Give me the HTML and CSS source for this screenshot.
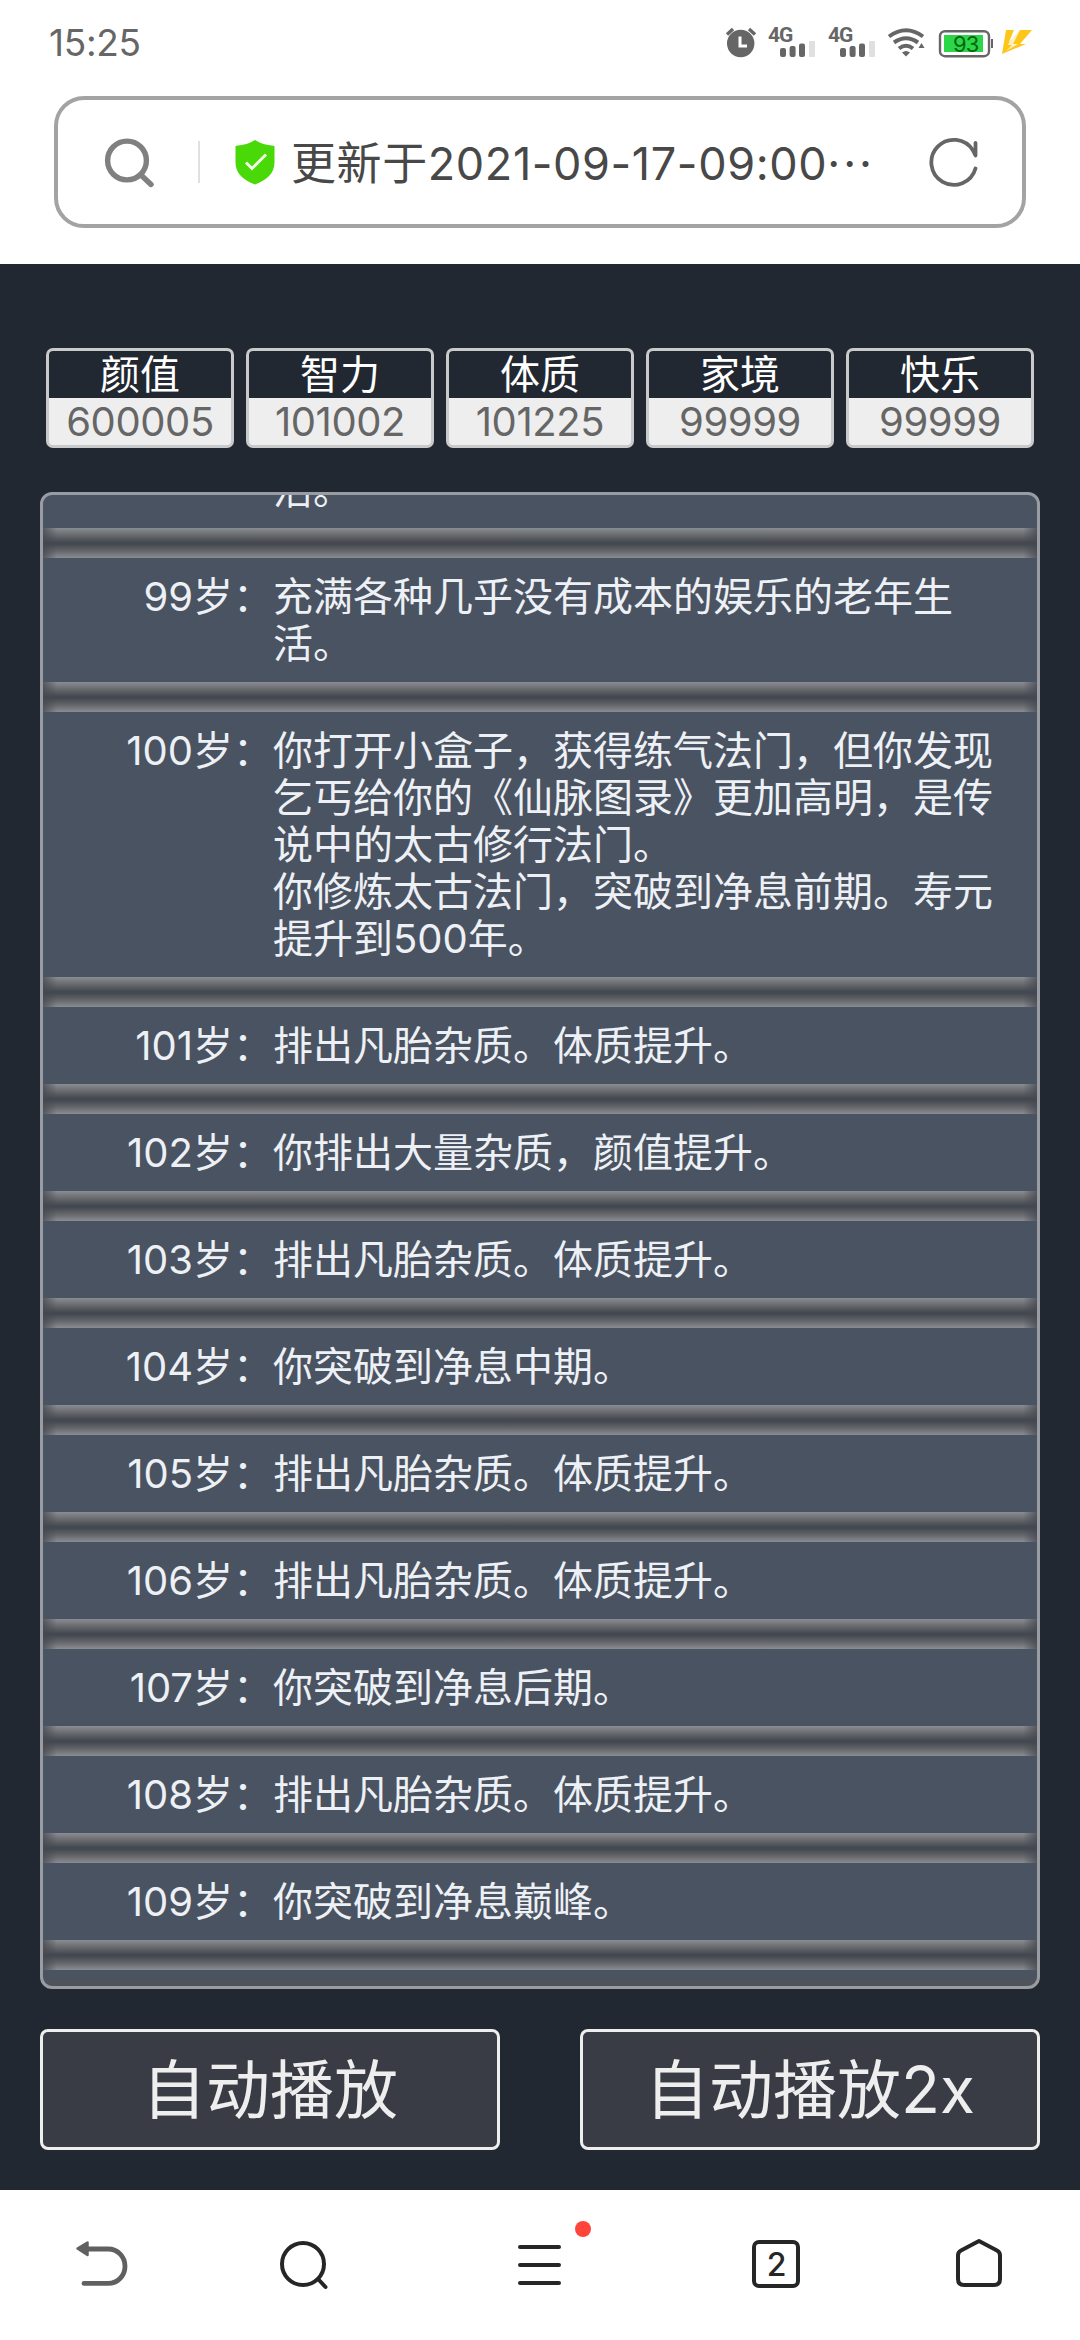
FILE: index.html
```html
<!DOCTYPE html>
<html lang="zh-CN">
<head>
<meta charset="utf-8">
<title>更新于2021-09-17-09:00</title>
<link rel="stylesheet" href="styles.css">
</head>
<body>
<header class="chrome">
  <div class="status">
    <span class="clock">15:25</span>
    <svg class="status-icons" width="310" height="50" viewBox="725 15 310 50">
      <g fill="#666">
        <circle cx="740.7" cy="43.5" r="13.7"/>
        <path d="M727 34.500l6-5.500M755 34.500l-6-5.500" stroke="#666" stroke-width="3.400" fill="none"/>
        <path d="M740 36.500v9.500h7" stroke="#fff" stroke-width="3" fill="none"/>
        <text class="net" x="768" y="42">4G</text>
        <rect x="780" y="48" width="6" height="9" rx="2"/>
        <rect x="789.6" y="46" width="6" height="11" rx="2"/>
        <rect x="799" y="43.500" width="6" height="13.500" rx="2"/>
        <rect x="809" y="41" width="6" height="16" rx="1" fill="#e0e0e0"/>
        <text class="net" x="828" y="42">4G</text>
        <rect x="840" y="48" width="6" height="9" rx="2"/>
        <rect x="849.6" y="46" width="6" height="11" rx="2"/>
        <rect x="859" y="43.500" width="6" height="13.500" rx="2"/>
        <rect x="869" y="41" width="6" height="16" rx="1" fill="#e0e0e0"/>
        <path d="M902 52.500q4-3 8 0l-4 4z"/>
        <path d="M918.500 48l3-5 3 5z"/>
      </g>
      <g fill="none" stroke="#666" stroke-width="4">
        <path d="M889 36.500q17-12.500 34 0M894 42.500q12-8.500 24 0M899 48.500q7-5.500 14 0"/>
      </g>
      <rect x="940" y="31.200" width="49" height="25" rx="5" fill="#fff" stroke="#666" stroke-width="2.400"/>
      <rect x="944" y="35" width="39" height="17" fill="#2bd748"/>
      <path d="M992 39v9" stroke="#666" stroke-width="2"/>
      <text class="charge" x="953" y="51.500">93</text>
      <path d="M1006 30h8l-5 12 11-12h12l-12 14h6l-24 10z" fill="#ffc61a"/>
      <path d="M1016 30h4l-7 14h5l-12 7 6-6h-4z" fill="#fff" opacity=".75"/>
    </svg>
  </div>
  <div class="address">
    <svg class="find" width="52" height="52" viewBox="102 134.500 52 52" fill="none" stroke="#808080" stroke-width="5.400" stroke-linecap="round"><circle cx="127" cy="159" r="19.400"/><path d="M141.500 174l9.500 9"/></svg>
    <span class="rule"></span>
    <svg class="shield" width="40" height="46" viewBox="0 0 40 46"><path d="M20 1c6 4 13 5 19.500 6v16c0 12-8 18-19.500 22.500C8.500 41 .5 35 .5 23V7C7 6 14 5 20 1z" fill="#49d808"/><path d="M11 23.500l6 6L31 15.500" stroke="#f1ffe9" stroke-width="3" fill="none"/></svg>
    <span class="title">更新于2021-09-17-09:00<span class="dots">···</span></span>
    <svg class="reload" width="52" height="52" viewBox="927 136 52 52" fill="none" stroke="#666" stroke-width="3.800" stroke-linecap="round" stroke-linejoin="round"><path d="M975.500 168.500a22.500 22.500 0 1 1-2.500-18l2.500 5V143"/></svg>
  </div>
</header>

<main class="game">
  <ul class="stats">
    <li class="stat"><span class="stat-name">颜值</span><span class="stat-value">600005</span></li>
    <li class="stat"><span class="stat-name">智力</span><span class="stat-value">101002</span></li>
    <li class="stat"><span class="stat-name">体质</span><span class="stat-value">101225</span></li>
    <li class="stat"><span class="stat-name">家境</span><span class="stat-value">99999</span></li>
    <li class="stat"><span class="stat-name">快乐</span><span class="stat-value">99999</span></li>
  </ul>

  <ul class="life">
    <li class="year"><span class="age"></span><span class="event">活。</span></li>
    <li class="year"><span class="age">99岁：</span><span class="event">充满各种几乎没有成本的娱乐的老年生<br>活。</span></li>
    <li class="year"><span class="age">100岁：</span><span class="event">你打开小盒子，获得练气法门，但你发现<br>乞丐给你的《仙脉图录》更加高明，是传<br>说中的太古修行法门。<br>你修炼太古法门，突破到净息前期。寿元<br>提升到500年。</span></li>
    <li class="year"><span class="age">101岁：</span><span class="event">排出凡胎杂质。体质提升。</span></li>
    <li class="year"><span class="age">102岁：</span><span class="event">你排出大量杂质，颜值提升。</span></li>
    <li class="year"><span class="age">103岁：</span><span class="event">排出凡胎杂质。体质提升。</span></li>
    <li class="year"><span class="age">104岁：</span><span class="event">你突破到净息中期。</span></li>
    <li class="year"><span class="age">105岁：</span><span class="event">排出凡胎杂质。体质提升。</span></li>
    <li class="year"><span class="age">106岁：</span><span class="event">排出凡胎杂质。体质提升。</span></li>
    <li class="year"><span class="age">107岁：</span><span class="event">你突破到净息后期。</span></li>
    <li class="year"><span class="age">108岁：</span><span class="event">排出凡胎杂质。体质提升。</span></li>
    <li class="year"><span class="age">109岁：</span><span class="event">你突破到净息巅峰。</span></li>
  </ul>

  <div class="actions">
    <button class="play">自动播放</button>
    <button class="play">自动播放2x</button>
  </div>
</main>

<nav class="toolbar">
  <svg width="216" height="150" viewBox="0 2190 216 150"><path d="M87 2249h21c10 0 17 8 17 17.200s-7 17.200-17 17.200H84" fill="none" stroke="#606060" stroke-width="4.800" stroke-linecap="round"/><path d="M77.500 2248.500l10-6v12.500z" fill="#606060" stroke="#606060" stroke-width="2.500" stroke-linejoin="round"/></svg>
  <svg width="216" height="150" viewBox="216 2190 216 150" fill="none" stroke="#262626" stroke-width="4" stroke-linecap="round"><circle cx="303" cy="2264" r="21"/><path d="M319 2280l6.500 7"/></svg>
  <svg width="216" height="150" viewBox="432 2190 216 150"><path d="M520 2247h39M520 2265h39M520 2283h39" stroke="#262626" stroke-width="4" stroke-linecap="round"/><circle cx="583" cy="2229" r="8" fill="#ff453a"/></svg>
  <svg width="216" height="150" viewBox="648 2190 216 150"><rect x="754" y="2242" width="44" height="44" rx="5" fill="none" stroke="#262626" stroke-width="4"/><text class="tab-count" x="776.500" y="2276" text-anchor="middle">2</text></svg>
  <svg width="216" height="150" viewBox="864 2190 216 150" fill="none" stroke="#262626" stroke-width="4" stroke-linejoin="round"><path d="M979 2241l18 9.500q3 1.500 3 5V2279q0 6-6 6h-30q-6 0-6-6v-23.500q0-3.500 3-5z"/></svg>
</nav>
</body>
</html>
```
FILE: styles.css
```css
* { box-sizing: border-box; }
body {
  margin: 0;
  width: 1080px;
  height: 2340px;
  display: flex;
  flex-direction: column;
  overflow: hidden;
  background: #fff;
  font-family: Inter, "Noto Sans CJK SC", sans-serif;
}
ul { margin: 0; padding: 0; list-style: none; }

.chrome { height: 264px; flex: none; }
.status {
  height: 96px;
  padding: 15px 45px 0 49px;
  display: flex;
  justify-content: space-between;
}
.clock { font-size: 37px; line-height: 56px; color: #666; letter-spacing: -0.3px; }
.net { font: 700 21px Roboto, sans-serif; letter-spacing: -1px; }
.charge { font-size: 22px; letter-spacing: -1px; fill: #06650f; }
.address {
  margin: 0 54px;
  height: 132px;
  border: 4px solid #a3a3a3;
  border-radius: 30px;
  display: flex;
  align-items: center;
  padding-left: 44px;
}
.rule { width: 2px; height: 42px; background: #e0e0e0; margin: 0 35px 0 44px; }
.title {
  width: 611px;
  margin-left: 16px;
  padding-top: 4px;
  font-size: 45px;
  line-height: 60px;
  letter-spacing: 0.6px;
  color: #484848;
  white-space: nowrap;
}
.dots { letter-spacing: 3px; }
.reload { margin-left: 25px; }

.game {
  flex: 1;
  padding: 84px 40px 40px;
  background: #222831;
  display: flex;
  flex-direction: column;
}
.stats { display: grid; grid-template-columns: repeat(5, 188px); gap: 12px; padding-left: 6px; }
.stat {
  height: 100px;
  border: 3px solid #c9cacc;
  border-radius: 7px;
  background: #eee;
  overflow: hidden;
  display: grid;
  grid-template-rows: 47px 47px;
  text-align: center;
  font-size: 40px;
  line-height: 47px;
}
.stat-name { background: #222831; color: #fff; }
.stat-value { color: #666; font-weight: 400; letter-spacing: -0.4px; }

.life {
  height: 1497px;
  margin-top: 44px;
  padding-bottom: 16px;
  border: 3px solid #999ca2;
  border-radius: 12px;
  background: linear-gradient(to top, #515359, #4a5361 12px);
  overflow: hidden;
  display: flex;
  flex-direction: column;
  justify-content: flex-end;
  color: #edf0f4;
  font-size: 40px;
  line-height: 47px;
}
.year { flex: none; display: grid; grid-template-columns: 230px 1fr; padding-top: 15px; white-space: nowrap; }
.age { text-align: right; }
.year::after {
  content: "";
  grid-column: 1 / -1;
  height: 30px;
  margin-top: 15px;
  background:
    linear-gradient(to right, rgba(68, 72, 80, 0.75), rgba(68, 72, 80, 0) 14px),
    linear-gradient(to left, rgba(68, 72, 80, 0.75), rgba(68, 72, 80, 0) 14px),
    linear-gradient(#8a8d92, #66686c 25%, #444850 48%, #444850 54%, #66686c 78%, #8a8d92);
}

.actions { display: flex; justify-content: space-between; margin-top: 40px; }
.play {
  width: 460px;
  height: 121px;
  padding: 0;
  border: 3px solid #eee;
  border-radius: 8px;
  background: #393c45;
  color: #eee;
  font: 400 64px/115px Inter, "Noto Sans CJK SC", sans-serif;
}

.toolbar { height: 150px; flex: none; display: flex; }
.tab-count { font-size: 32px; font-weight: 500; fill: #262626; }
```
